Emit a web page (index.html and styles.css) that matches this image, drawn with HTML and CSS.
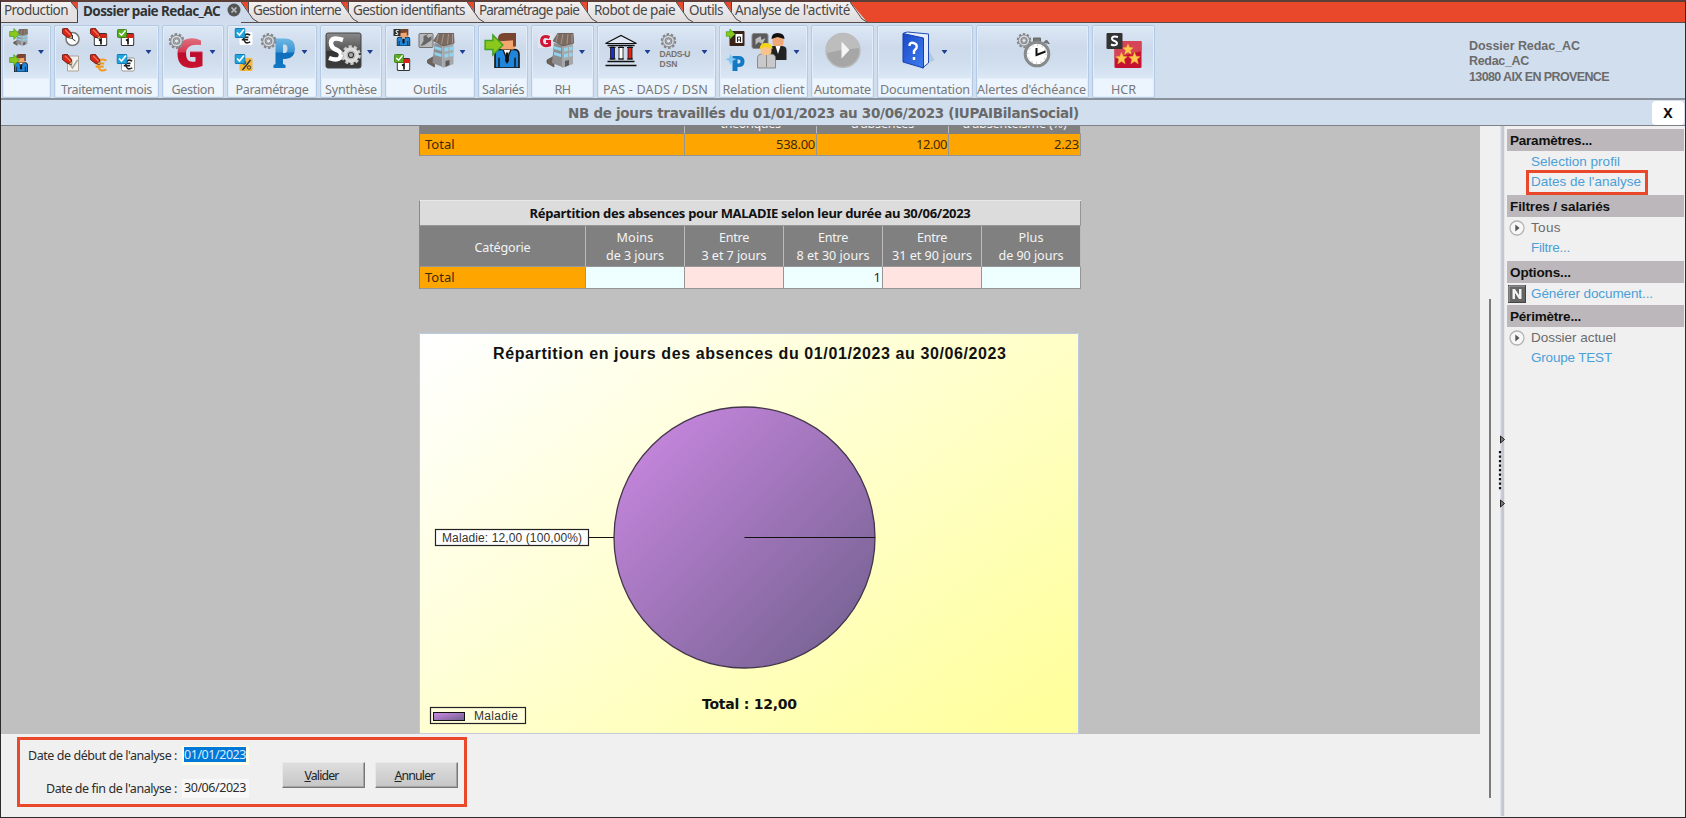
FILE: index.html
```html
<!DOCTYPE html>
<html lang="fr">
<head>
<meta charset="utf-8">
<title>Dossier paie Redac_AC</title>
<link rel="stylesheet" href="styles.css">
</head>
<body>
<svg class="defs" width="0" height="0">
  <defs>
    <linearGradient id="gloss" x1="0" y1="0" x2="0" y2="1"><stop offset="0" stop-color="#e0707c"/><stop offset=".45" stop-color="#d63a52"/><stop offset=".5" stop-color="#bd0c2c"/><stop offset="1" stop-color="#c9122f"/></linearGradient>
    <linearGradient id="glossBlue" x1="0" y1="0" x2="0" y2="1"><stop offset="0" stop-color="#6db6e4"/><stop offset=".45" stop-color="#3d95d4"/><stop offset=".5" stop-color="#0f6fbb"/><stop offset="1" stop-color="#1278c4"/></linearGradient>
    <linearGradient id="dark" x1="0" y1="0" x2="0" y2="1"><stop offset="0" stop-color="#8a8a8a"/><stop offset=".5" stop-color="#555"/><stop offset=".51" stop-color="#333"/><stop offset="1" stop-color="#3c3c3c"/></linearGradient>
    <linearGradient id="book" x1="0" y1="0" x2="1" y2="1"><stop offset="0" stop-color="#1a49c8"/><stop offset="1" stop-color="#3f7df0"/></linearGradient>
    <symbol id="gear" viewBox="0 0 16 16"><circle cx="8" cy="8" r="6.800" fill="none" stroke="#85888c" stroke-width="2.200" stroke-dasharray="2.600 1.670"/><circle cx="8" cy="8" r="4.400" fill="none" stroke="#8b8e92" stroke-width="3.800"/><circle cx="8" cy="8" r="4.600" fill="none" stroke="#d9dbde" stroke-width="1.500"/><circle cx="8" cy="8" r="2" fill="#e8edf5" stroke="#777" stroke-width=".7"/></symbol>
    <symbol id="gearLight" viewBox="0 0 16 16"><circle cx="8" cy="8" r="6.800" fill="none" stroke="#c9c9c9" stroke-width="2.200" stroke-dasharray="2.600 1.670"/><circle cx="8" cy="8" r="4.400" fill="none" stroke="#dcdcdc" stroke-width="3.800"/><circle cx="8" cy="8" r="3.200" fill="none" stroke="#aaa" stroke-width=".7"/><circle cx="8" cy="8" r="1.600" fill="#aaa"/></symbol>
    <symbol id="drop" viewBox="0 0 6 4"><path d="M0 0H6L3 4Z" fill="#1c3f94"/></symbol>
    <symbol id="arrow" viewBox="0 0 18 20"><path d="M1 6H8V1L17 10L8 19V14H1Z" fill="#8cc81c" stroke="#3fa02a" stroke-width="1.300"/></symbol>
    <symbol id="tower" viewBox="0 0 28 35" preserveAspectRatio="none"><path d="M1 27L8 23V34L1 30Z" fill="#6f6259" stroke="#444" stroke-width=".6"/><path d="M8 10L16 12V34L6 30Z" fill="#8e8e90"/><path d="M16 12L27 10V31L16 35Z" fill="#a7a7a9"/><path d="M7 8L12 0H27L28 10L17 13Z" fill="#7b6a60" stroke="#555" stroke-width=".6"/><path d="M12 1L10 9M17 1L15 11M22 1L21 11M26 1L26 10" stroke="#a8978c" stroke-width="1"/><path d="M8 13L15 15V18L8 16ZM18 15L22 14.300V18L18 18.700ZM23 14L26.500 13.400V17L23 17.700ZM8 19L15 21V24L8 22ZM18 21L22 20.300V24L18 24.700ZM23 20L26.500 19.400V23L23 23.700Z" fill="#8fd3ee"/><path d="M19 28L23 27V32L19 34Z" fill="#5c5c5e"/></symbol>
    <symbol id="man" viewBox="0 0 26 34" preserveAspectRatio="none"><path d="M1 34V21Q1 16 6 16H20Q25 16 25 21V34Z" fill="#1f86dc" stroke="#111" stroke-width="1.600"/><path d="M9 16L13 26L17 16Z" fill="#fff" stroke="#111" stroke-width="1.200"/><path d="M12 19H14.500L15 27L13 30L11 27Z" fill="#111"/><path d="M5 24V33M21 24V33" stroke="#111" stroke-width="1.400"/><rect x="6" y="2" width="15" height="14" rx="3" fill="#f2a56f"/><path d="M4 8Q3 0 10 0H22V13H19V7Q10 8 4 8Z" fill="#7a452f"/></symbol>
    <symbol id="pencil" viewBox="0 0 12 12"><path d="M1 1L6 0L11 6L11 11L6 10L1 6Z" fill="#d92717" stroke="#5c130b" stroke-width=".9"/><path d="M4 2L10 8" stroke="#f57b60" stroke-width="1.300"/><path d="M8 11L11.500 7.500L11.500 11.500Z" fill="#f5c26b" stroke="#333" stroke-width=".6"/></symbol>
    <symbol id="calendar" viewBox="0 0 14 14"><rect x=".7" y="1.500" width="12.600" height="12" rx="1.500" fill="#fff" stroke="#333" stroke-width="1.200"/><path d="M1 2H13V6H1Z" fill="#d82418"/><path d="M5.500 8.500L7.500 7.300V12.500" fill="none" stroke="#111" stroke-width="1.700"/></symbol>
    <symbol id="okGreen" viewBox="0 0 11 10"><rect x=".5" y=".5" width="10" height="9" rx="1" fill="#5aae23" stroke="#3d7d15"/><path d="M2.500 4.500L5 7L9.500 1.500" fill="none" stroke="#fff" stroke-width="1.600"/></symbol>
    <symbol id="okBlue" viewBox="0 0 11 10"><rect x=".5" y=".5" width="10" height="9" rx="1" fill="#22a4dc" stroke="#127bb0"/><path d="M2.500 4.500L5 7L9.500 1.500" fill="none" stroke="#fff" stroke-width="1.600"/></symbol>
    <symbol id="euro" viewBox="0 0 12 13"><path d="M11 2.500Q4 -1 3.500 6.500Q4 14 11 10.500M1 5.200H9M1 8H8.500" fill="none" stroke="currentColor" stroke-width="1.900"/></symbol>
    <symbol id="star" viewBox="0 0 12 12"><path d="M6 0L7.700 4.200L12 4.500L8.700 7.300L9.800 12L6 9.500L2.200 12L3.300 7.300L0 4.500L4.300 4.200Z" fill="#ffc94d" stroke="#e8932d" stroke-width=".4"/></symbol>
    <symbol id="bullet" viewBox="0 0 16 16"><circle cx="8" cy="8" r="7" fill="#f7f7f7" stroke="#b4b4b4" stroke-width="1.300"/><path d="M6.300 4.500L10.500 8L6.300 11.500Z" fill="#555"/></symbol>
  </defs>
</svg>
<div class="window">
  <nav class="tabs">
    <a class="tab w-prod"><span data-w="64">Production</span></a>
    <svg class="corner" viewBox="0 0 7 20"><path d="M0 0H7V8Z" fill="#e9492a"/><path d="M0 0L6.500 8V20" fill="none" stroke="#444"/></svg>
    <a class="tab active w-paie"><span data-w="137">Dossier paie Redac_AC</span>
      <svg class="close" viewBox="0 0 14 14"><circle cx="7" cy="7" r="6.500" fill="#555"/><path d="M4.500 4.500L9.500 9.500M9.500 4.500L4.500 9.500" stroke="#b8bcc2" stroke-width="1.700"/></svg></a>
    <svg class="slant blue" viewBox="0 0 17 20"><path d="M0 0H8V10Z" fill="#e9492a"/><path class="own" d="M0 0L12 17L17 20H0Z"/><path d="M0 0L12 17L17 20M7.500 0V10" class="edge"/></svg>
    <a class="tab w-int"><span data-w="88">Gestion interne</span></a>
    <svg class="slant" viewBox="0 0 17 20"><path d="M0 0H8V10Z" fill="#e9492a"/><path d="M0 0L12 17L17 20M7.500 0V10" class="edge"/></svg>
    <a class="tab w-ident"><span data-w="112">Gestion identifiants</span></a>
    <svg class="slant" viewBox="0 0 17 20"><path d="M0 0H8V10Z" fill="#e9492a"/><path d="M0 0L12 17L17 20M7.500 0V10" class="edge"/></svg>
    <a class="tab w-param"><span data-w="100">Paramétrage paie</span></a>
    <svg class="slant" viewBox="0 0 17 20"><path d="M0 0H8V10Z" fill="#e9492a"/><path d="M0 0L12 17L17 20M7.500 0V10" class="edge"/></svg>
    <a class="tab w-robot"><span data-w="81">Robot de paie</span></a>
    <svg class="slant" viewBox="0 0 17 20"><path d="M0 0H8V10Z" fill="#e9492a"/><path d="M0 0L12 17L17 20M7.500 0V10" class="edge"/></svg>
    <a class="tab w-outils"><span data-w="34">Outils</span></a>
    <svg class="slant" viewBox="0 0 17 20"><path d="M0 0H8V10Z" fill="#e9492a"/><path d="M0 0L12 17L17 20M7.500 0V10" class="edge"/></svg>
    <a class="tab w-act"><span data-w="115">Analyse de l'activité</span></a>
    <svg class="slant" viewBox="0 0 17 20"><path d="M0 0H17V20Z" fill="#e9492a"/><path d="M0 0L12 17L17 20" class="edge"/></svg>
  </nav>

  <header class="ribbon">
    <section class="group g1"><svg viewBox="2 25 49 53">
      <use href="#tower" x="13" y="29" width="15" height="17"/><use href="#arrow" x="9" y="28" width="11" height="12"/>
      <use href="#man" x="14" y="54" width="14" height="18"/><use href="#arrow" x="9" y="54" width="11" height="12"/>
      <use href="#drop" x="38" y="50" width="6" height="4"/></svg><h2></h2></section>
    <section class="group g2"><svg viewBox="55 25 104 53">
      <circle cx="73" cy="39" r="6.500" fill="#fff" stroke="#777" stroke-width="1.500"/><path d="M73 35V39L76 41" stroke="#333" fill="none"/><use href="#pencil" x="62" y="28" width="11" height="11"/>
      <use href="#calendar" x="94" y="32" width="14" height="14"/><use href="#pencil" x="90" y="28" width="11" height="11"/>
      <use href="#calendar" x="121" y="32" width="14" height="14"/><use href="#okGreen" x="117" y="29" width="11" height="9"/>
      <path d="M68 56H79V71H68Z" fill="#f3f1ec" stroke="#aaa59c"/><path d="M70 64L73 68L78 60" stroke="#aaa59c" fill="none" stroke-width="1.500"/><use href="#pencil" x="62" y="54" width="11" height="11"/>
      <use href="#euro" x="95" y="58" width="13" height="14" color="#f29a22"/><use href="#pencil" x="90" y="54" width="11" height="11"/>
      <rect x="122" y="58" width="13" height="13" rx="1.500" fill="#fff" stroke="#999"/><use href="#euro" x="123" y="59" width="11" height="11" color="#222"/><use href="#okBlue" x="117" y="54" width="11" height="10"/>
      <use href="#drop" x="146" y="50" width="6" height="4"/></svg><h2 data-w="91">Traitement mois</h2></section>
    <section class="group g3"><svg viewBox="163 25 61 53">
      <path d="M201.500 45V40.500Q197 38.300 192 38.300Q178 39 178 53.500Q178 68 192 68Q198 68 203 66V51.500H190.500V57H196V61.500Q186.500 63.500 186.500 53.500Q186.500 43 201.500 45Z" fill="url(#gloss)"/><use href="#gear" x="169" y="33" width="16" height="16"/>
      <use href="#drop" x="210" y="50" width="6" height="4"/></svg><h2 data-w="43">Gestion</h2></section>
    <section class="group g4"><svg viewBox="228 25 89 53">
      <rect x="240" y="32" width="13" height="13" rx="1.500" fill="#fff"/><use href="#euro" x="241" y="33" width="11" height="11" color="#222"/><use href="#okBlue" x="235" y="28" width="11" height="10"/>
      <rect x="240" y="58" width="13" height="13" rx="1.500" fill="#f5b63c"/><path d="M243 70L251 60" stroke="#333" stroke-width="1.400"/><circle cx="244.500" cy="62.500" r="1.700" fill="none" stroke="#333"/><circle cx="249.500" cy="67.500" r="1.700" fill="none" stroke="#333"/><use href="#okBlue" x="235" y="54" width="11" height="10"/>
      <path fill-rule="evenodd" d="M274 38.500H286Q295.500 38.500 295.500 48.500Q295.500 58.500 286 59H283.500V64L286 65V68H274V65L276 64V43L274 42ZM283.500 44.500V53H285Q288 53 288 48.500Q288 44.500 285 44.500Z" fill="url(#glossBlue)"/><use href="#gear" x="261" y="33" width="16" height="16"/>
      <use href="#drop" x="302" y="50" width="6" height="4"/></svg><h2 data-w="73">Paramétrage</h2></section>
    <section class="group g5"><svg viewBox="320 25 62 53">
      <rect x="326" y="33" width="35" height="35" rx="2" fill="url(#dark)" stroke="#444"/><path d="M343 40Q331 36 331 43Q331 48 337 50Q343 53 340 58Q337 61 329 58" fill="none" stroke="#fff" stroke-width="4.500"/><use href="#gearLight" x="341" y="45" width="20" height="20"/>
      <use href="#drop" x="367" y="50" width="6" height="4"/></svg><h2 data-w="52">Synthèse</h2></section>
    <section class="group g6"><svg viewBox="385 25 89 53">
      <use href="#man" x="396" y="29" width="14" height="17"/><rect x="393" y="29" width="7" height="7" fill="#333"/><path d="M398 30.500Q395 30 395.500 32Q398.500 33 397 34.500H395" stroke="#fff" fill="none"/>
      <use href="#calendar" x="396" y="57" width="14" height="14"/><use href="#okGreen" x="393" y="54" width="11" height="9"/>
      <use href="#tower" x="426" y="33" width="28" height="35"/><rect x="418.500" y="33.500" width="14" height="14" rx="1" fill="#b9b9bb" stroke="#707070"/><path d="M420 46L424 45L431 40V36L428 38L426 36L428 34L423 36L423 41Z" fill="#666"/>
      <use href="#drop" x="459" y="50" width="6" height="4"/></svg><h2 data-w="34">Outils</h2></section>
    <section class="group g7"><svg viewBox="478 25 50 53"><use href="#man" x="494" y="33" width="26" height="35"/><use href="#arrow" x="484" y="33" width="20" height="24"/></svg><h2 data-w="42">Salariés</h2></section>
    <section class="group g8"><svg viewBox="531 25 63 53">
      <use href="#tower" x="546" y="33" width="28" height="35"/><rect x="538" y="33" width="15" height="15" fill="#dfe4ee"/><path d="M549.500 37.500Q542 34.500 541.500 41Q542 47.500 549.500 45V41.500H546" fill="none" stroke="#cf1735" stroke-width="3"/>
      <use href="#drop" x="579" y="50" width="6" height="4"/></svg><h2 data-w="16">RH</h2></section>
    <section class="group g9"><svg viewBox="597 25 118 53">
      <path d="M605 43.500L620.500 35.500L636 43.500Z" fill="#dfe8f4" stroke="#111" stroke-width="1.200"/><path d="M607 45.500H634M607 61.500H634M605 65.500H636" stroke="#111" stroke-width="1.600"/><path d="M610 47H614V59H610Z" fill="#1a2fc4" stroke="#111" stroke-width=".8"/><path d="M618.500 47H622.500V59H618.500Z" fill="#fff" stroke="#111" stroke-width=".8"/><path d="M627.500 47H631.500V59H627.500Z" fill="#e2231a" stroke="#111" stroke-width=".8"/><path d="M609 47.500H615M617.500 47.500H623.500M626.500 47.500H632.500M609 59H615M617.500 59H623.500M626.500 59H632.500" stroke="#111"/>
      <use href="#drop" x="644" y="50" width="6" height="4"/><use href="#gear" x="660" y="33" width="16" height="16"/>
      <text x="659" y="57" class="mini" textLength="31">DADS-U</text><text x="659" y="67" class="mini" textLength="18">DSN</text>
      <use href="#drop" x="701" y="50" width="6" height="4"/></svg><h2 data-w="105">PAS - DADS / DSN</h2></section>
    <section class="group g10"><svg viewBox="719 25 88 53">
      <rect x="729" y="31" width="15" height="15" rx="1" fill="#3a2216"/><rect x="735" y="34" width="7" height="9" fill="#fff"/><path d="M737 42V37H740V42M737 40H740" stroke="#222" fill="none"/><use href="#arrow" x="725" y="28" width="10" height="12"/>
      <path fill-rule="evenodd" d="M732 56H738Q744 56 744 61.500Q744 67 738 67H737V71H732ZM737 59.500V63.500H738.500Q740 63.500 740 61.500Q740 59.500 738.500 59.500Z" fill="#1479c4"/><path d="M730 54L732 58L736 59L732 61L730 65L728.500 61L725 59L728.500 58Z" fill="#80c8f2"/>
      <rect x="751.500" y="33.500" width="16" height="15" rx="2" fill="#5a5a5a" stroke="#888"/><path d="M755 39L760 36L761 40L765 38L762 44L758 42L755 45Z" fill="#bbb"/>
      <path d="M768 60V50Q768 46 773 46H781Q786 46 786 50V60Z" fill="#222"/><path d="M775 46L777.500 54L780 46Z" fill="#fff"/><rect x="772" y="35" width="11" height="11" rx="3" fill="#f0a878"/><path d="M771 39Q771 33 777 33Q784 33 784 39L777 37Z" fill="#111"/>
      <path d="M757 68V58Q757 54 762 54H770Q775 54 775 58V68Z" fill="#c9c9cb" stroke="#777" stroke-width=".8"/><path d="M766 55V67" stroke="#888"/><rect x="760" y="45" width="11" height="10" rx="4" fill="#f8c48c"/><path d="M759 49Q760 42 766 43Q772 43 772 49L766 47Z" fill="#f5d51c"/>
      <use href="#drop" x="793" y="50" width="6" height="4"/></svg><h2 data-w="82">Relation client</h2></section>
    <section class="group g11"><svg viewBox="811 25 62 53"><circle cx="842.500" cy="50.500" r="17" fill="#a6a6a6" stroke="#bcbcbc" stroke-width="1.500"/><path d="M826 51A16.500 16.500 0 0 1 859 48Q843 49 826 53Z" fill="#bdbdbd"/><path d="M841 41.500L849 50L841 58.500Z" fill="#f5f5f5"/></svg><h2 data-w="57">Automate</h2></section>
    <section class="group g12"><svg viewBox="877 25 95 53"><path d="M923 65L934 60L926 47Z" fill="#a9bddb" opacity=".7"/><path d="M903 33L907 32L928 34V63L922 68Z" fill="#e9effa" stroke="#1f4db5"/><path d="M902.500 33.500L923 38V68L902.500 62Z" fill="url(#book)" stroke="#173fae"/><path d="M909 46Q909 42 913 43Q917 44 916 48L913.500 51V54M913.500 57V60" stroke="#fff" stroke-width="2.400" fill="none"/><use href="#drop" x="941" y="50" width="6" height="4"/></svg><h2 data-w="90">Documentation</h2></section>
    <section class="group g13"><svg viewBox="976 25 112 53"><path d="M1033 38H1040V42H1033ZM1025 43L1028 40L1031 43M1043 43L1046 40L1049 44" fill="#777" stroke="#666"/><circle cx="1036.500" cy="54" r="11.800" fill="#fff" stroke="#88898b" stroke-width="3"/><circle cx="1036.500" cy="54" r="9" fill="none" stroke="#999" stroke-dasharray="1 3.700"/><path d="M1036 48V55L1045 51.500" fill="none" stroke="#111" stroke-width="2"/><use href="#gear" x="1016" y="33" width="15" height="15"/></svg><h2 data-w="109">Alertes d'échéance</h2></section>
    <section class="group g14"><svg viewBox="1092 25 62 53"><rect x="1114" y="41" width="27" height="27" rx="1.500" fill="#c51231"/><path d="M1114 41H1141V51Q1127 54 1114 59Z" fill="#d64458"/><use href="#star" x="1122" y="43" width="11" height="12"/><use href="#star" x="1115" y="52" width="12" height="12"/><use href="#star" x="1128" y="52" width="12" height="12"/><rect x="1106" y="33" width="16" height="16" rx="1" fill="#333"/><path d="M1117.500 37Q1111 35.500 1111.500 39Q1112 40.500 1114 41Q1117.500 42.500 1116 44.500Q1114 46 1110.500 44.500" fill="none" stroke="#fff" stroke-width="2.100"/></svg><h2 data-w="25">HCR</h2></section>
    <address class="client"><span data-w="111">Dossier Redac_AC</span><span data-w="60">Redac_AC</span><span data-w="140">13080 AIX EN PROVENCE</span></address>
  </header>

  <div class="titlebar"><h1 data-w="511">NB de jours travaillés du 01/01/2023 au 30/06/2023 (IUPAIBilanSocial)</h1><button class="x">X</button></div>

  <main class="body">
    <div class="workspace">
      <div class="report">
        <div class="grid rate">
          <div class="head"></div><div class="head"><span data-w="60">théoriques</span></div><div class="head"><span data-w="63">d'absences</span></div><div class="head"><span data-w="104">d'absentéisme (%)</span></div>
          <div class="total">Total</div><div class="total num"><span data-w="39">538.00</span></div><div class="total num"><span data-w="31">12.00</span></div><div class="total num"><span data-w="25">2.23</span></div>
        </div>
        <div class="grid spread">
          <div class="caption"><span data-w="441">Répartition des absences pour MALADIE selon leur durée au 30/06/2023</span></div>
          <div class="head single"><span data-w="56">Catégorie</span></div>
          <div class="head"><span data-w="37">Moins</span><span data-w="58">de 3 jours</span></div>
          <div class="head"><span data-w="30">Entre</span><span data-w="65">3 et 7 jours</span></div>
          <div class="head"><span data-w="30">Entre</span><span data-w="73">8 et 30 jours</span></div>
          <div class="head"><span data-w="30">Entre</span><span data-w="80">31 et 90 jours</span></div>
          <div class="head"><span data-w="25">Plus</span><span data-w="65">de 90 jours</span></div>
          <div class="total">Total</div><div class="cyan"></div><div class="pink"></div><div class="cyan num">1</div><div class="pink"></div><div class="cyan"></div>
        </div>
        <svg class="chart" viewBox="419 333 660 401">
          <defs>
            <linearGradient id="paper" gradientUnits="userSpaceOnUse" x1="480" y1="300" x2="880" y2="830"><stop offset="0" stop-color="#fff"/><stop offset=".08" stop-color="#fffff8"/><stop offset="1" stop-color="#ffff9e"/></linearGradient>
            <linearGradient id="slice" x1=".12" y1=".12" x2=".88" y2=".88"><stop offset="0" stop-color="#c385db"/><stop offset="1" stop-color="#7a6496"/></linearGradient>
          </defs>
          <rect x="419" y="333" width="660" height="401" fill="url(#paper)"/><path d="M419.500 734V333.500H1078.500V734" fill="none" stroke="#b9cbe0"/><path d="M419 733.500H1079" stroke="#c4ccd8"/>
          <text class="heading" x="493" y="358.500" textLength="513">Répartition en jours des absences du 01/01/2023 au 30/06/2023</text>
          <circle cx="744.500" cy="537.500" r="130.500" fill="url(#slice)" stroke="#43364c" stroke-width="1.300"/>
          <path d="M744.500 537.500H875M589 537.500H614" stroke="#111" stroke-width="1.200"/>
          <rect x="435.500" y="529.500" width="153" height="16" fill="#fff" stroke="#222" stroke-width="1.200"/>
          <text class="tag" x="442" y="541.500" textLength="140">Maladie: 12,00 (100,00%)</text>
          <text class="sum" x="702" y="708.500" textLength="95">Total : 12,00</text>
          <rect x="430.500" y="707.500" width="95" height="16" fill="#ffffdc" stroke="#222" stroke-width="1.200"/><rect x="433.500" y="712.500" width="31" height="8" fill="url(#slice)" stroke="#111"/>
          <text class="tag" x="474" y="719.500" textLength="44">Maladie</text>
        </svg>
      </div>
      <form class="dates">
        <div class="fields">
          <label data-w="149">Date de début de l'analyse :</label><span class="field focus"><mark data-w="62">01/01/2023</mark></span>
          <label data-w="131">Date de fin de l'analyse :</label><span class="field"><span data-w="62">30/06/2023</span></span>
        </div>
        <button type="button"><span data-w="34"><u>V</u>alider</span></button><button type="button"><span data-w="40"><u>A</u>nnuler</span></button>
      </form>
    </div>
    <div class="scroll"><i></i></div>
    <svg class="splitter" viewBox="1498 126 7 690"><path d="M1502.500 126V816" stroke="#c4c6d2" stroke-width="3.500"/><path d="M1501 126V816" stroke="#d9dae2"/><path d="M1500.500 436L1504.500 439.500L1500.500 443ZM1500.500 500L1504.500 503.500L1500.500 507Z" fill="#777" stroke="#222"/><path d="M1500 451V489.500" stroke="#111" stroke-width="2.200" stroke-dasharray="2.300 2.200"/></svg>
    <aside class="side">
      <h3><span data-w="82">Paramètres...</span></h3>
      <div class="links pad1"><a data-w="89">Selection profil</a><a class="boxed"><span data-w="110">Dates de l'analyse</span></a></div>
      <h3><span data-w="100">Filtres / salariés</span></h3>
      <div class="links pad2"><a class="cur"><svg viewBox="0 0 16 16"><use href="#bullet"/></svg><span data-w="30">Tous</span></a><a data-w="39">Filtre...</a></div>
      <h3><span data-w="61">Options...</span></h3>
      <div class="links pad3"><a><svg class="nico" viewBox="0 0 18 18"><rect x=".5" y=".5" width="17" height="17" fill="#666" stroke="#444"/><path d="M1 17V1H17" fill="none" stroke="#aaa"/><path d="M4.500 14V4H7L11 10V4H13.500V14H11L7 8V14Z" fill="#f2f2f2"/></svg><span data-w="122">Générer document...</span></a></div>
      <h3><span data-w="71">Périmètre...</span></h3>
      <div class="links pad4"><a class="cur"><svg viewBox="0 0 16 16"><use href="#bullet"/></svg><span data-w="85">Dossier actuel</span></a><a data-w="81">Groupe TEST</a></div>
    </aside>
  </main>
</div>
<script src="fit.js"></script>
</body>
</html>
```
FILE: styles.css
```css
* { box-sizing: border-box; }
body { margin: 0; font-family: "Noto Sans", "Open Sans", sans-serif; font-size: 13px; background: #f0f0f0; }
h1, h2, h3 { margin: 0; }
[data-w] { white-space: nowrap; }
.defs { position: absolute; }
.window { width: 1686px; height: 818px; display: flex; flex-direction: column; overflow: hidden; border: solid #2c2a2c; border-width: 2px 1px 1px 1px; border-top-color: #5d3d38; }

.tabs { display: flex; height: 21px; flex: none; background: #e9492a; border-bottom: 1px solid #5b4a4a; }
.tab { display: flex; align-items: center; height: 20px; background: linear-gradient(#f3f1f2, #dedbdc); color: #474747; font-size: 13.5px; line-height: 16px; }
.tab > span { position: relative; z-index: 1; margin: -4px 0 0 -5px; }
.tab.w-prod > span { margin-left: 3px; }
.tab.active { background: linear-gradient(#c9d6e8, #d2deee); color: #333; font-weight: 700; height: 21px; }
.tab.active > span { margin-left: 5px; }
.corner { width: 7px; height: 20px; background: #e4e1e2; }
.slant { width: 17px; height: 20px; background: linear-gradient(#f3f1f2, #dedbdc); }
.slant .own { fill: #ced9ea; }
.slant .edge { fill: none; stroke: #4f4a4a; stroke-width: 1; }
.close { width: 14px; height: 14px; margin: -5px 0 0 7px; }
.w-prod { width: 70px; } .w-paie { width: 163px; } .w-int { width: 83px; } .w-ident { width: 109px; }
.w-param { width: 96px; } .w-robot { width: 79px; } .w-outils { width: 31px; } .w-act { width: 109px; }
.tab.w-robot > span { margin-left: -3px; }
.tab.w-outils > span { margin-left: -4px; }
.tab.w-act > span { margin-left: -6px; }

.ribbon { display: flex; flex: none; gap: 3px; height: 77px; padding: 2px 0 0 1px; background: #d1deee; border-bottom: 2px solid #8b919a; }
.group { height: 73px; flex: none; display: flex; flex-direction: column; background: linear-gradient(#dde8f5, #cddaeb 22px, #cfdded 36px, #dbe7f5 52px, #ecf5fe 53px); border: 1px solid #b3cae6; border-radius: 2px; box-shadow: inset 0 0 0 1px #e2edf9; }
.group svg { height: 53px; margin: -1px -1px 0; display: block; flex: none; }
.group h2 { height: 20px; align-self: center; color: #787878; font-size: 12.6px; font-weight: 400; line-height: 23px; text-align: center; }
.g1 { width: 49px; } .g2 { width: 105px; } .g3 { width: 62px; } .g4 { width: 90px; } .g5 { width: 62px; } .g6 { width: 90px; } .g7 { width: 50px; }
.g8 { width: 63px; } .g9 { width: 119px; } .g10 { width: 89px; } .g11 { width: 63px; } .g12 { width: 96px; } .g13 { width: 113px; } .g14 { width: 63px; }
.g9 h2, .g13 h2 { margin-left: -2px; }
.mini { font: 700 8.5px "Liberation Sans", sans-serif; fill: #79726b; }
.client { display: flex; flex-direction: column; margin: 14px 0 0 311px; font: 700 12.5px/15.4px "Liberation Sans", Arial, sans-serif; color: #6b6b6b; }

.titlebar { display: flex; flex: none; height: 26px; background: #d1deee; border-bottom: 1px solid #7d8187; }
.titlebar h1 { height: 25px; margin-left: 567px; font: 700 13.5px/26px "DejaVu Sans", Verdana, sans-serif; color: #696969; }
.x { margin: 1px 1px 0 auto; width: 32px; height: 24px; padding: 0; border: 0; border-radius: 4px; background: #fff; font: 700 14px/22px "Noto Sans", sans-serif; color: #111; }

.body { display: flex; flex: 1; min-height: 0; }
.workspace { width: 1479px; display: flex; flex-direction: column; }
.report { height: 608px; background: #c0c0c0; padding-left: 418px; overflow: hidden; flex: none; }
.grid { display: grid; width: 662px; border-left: 1px solid #888; color: #3c2a0a; }
.grid > div { border-right: 1px solid #969696; border-bottom: 1px solid #969696; }
.grid .head { display: flex; flex-direction: column; align-items: center; justify-content: center; padding-top: 1px; background: #808080; color: #f4f4f4; border-right-color: #bbb; line-height: 17.5px; font-size: 12.6px; }
.grid .head.single { padding-top: 3px; }
.grid .total { background: #ffa500; padding-left: 5px; line-height: 20px; }
.grid .num { text-align: right; padding-right: 1px; line-height: 20px; }
.rate { grid-template-columns: 265px 132px 132px 132px; grid-template-rows: 8px 22px; }
.grid.rate .head { justify-content: flex-end; overflow: hidden; padding: 0 0 1px; border-bottom-color: #808080; }
.spread { margin-top: 44px; grid-template-columns: 166px repeat(5, 99px); grid-template-rows: 25px 41px 22px; border-top: 1px solid #e8e8e8; }
.spread .caption { grid-column: 1 / -1; background: #dcdcdc; color: #111; font-weight: 700; text-align: center; line-height: 24px; }
.cyan { background: #efffff; }
.pink { background: #ffe4e1; }
.chart { display: block; width: 660px; height: 401px; margin-top: 44px; }
.heading { font: 700 16px "Liberation Sans", Arial, sans-serif; fill: #111; }
.tag { font: 12px "Liberation Sans", Arial, sans-serif; fill: #333; }
.sum { font: 700 14px "DejaVu Sans", Verdana, sans-serif; fill: #111; }

.dates { display: flex; align-items: flex-start; width: 450px; height: 70px; margin: 3px 0 0 16px; border: 3px solid #e9492a; }
.fields { flex: none; display: grid; grid-template-columns: 159px 67px; grid-template-rows: 19px 19px; row-gap: 14px; margin: 6px 33px 0 3px; align-items: center; justify-items: end; font-size: 12.5px; color: #2c2c2c; }
.fields label { margin-right: 5px; }
.field { width: 67px; height: 19px; padding-left: 2px; line-height: 18px; background: #f8f8f8; }
.field.focus { background: #ffffe8; }
.field mark { display: inline-block; height: 15px; line-height: 15px; background: #0078d7; color: #dcecff; }
.dates button { flex: none; width: 83px; height: 26px; margin: 22px 10px 0 0; padding: 0 4px 0 0; border: 1px solid; border-color: #e8e8e8 #777 #777 #e8e8e8; box-shadow: inset -1px -1px #a5a5a5; background: linear-gradient(#dedede, #c6c6c6); font: 12.300px "Noto Sans", sans-serif; color: #222; }
.dates button:last-child { margin-right: 0; }

.scroll { width: 18px; padding: 173px 0 0 9px; background: #f0f0f0; }
.scroll i { display: block; width: 2px; height: 499px; background: #7b7b7b; }
.splitter { width: 7px; height: 690px; flex: none; }
.side { flex: 1; padding: 3px 1px 0 2px; font: 13.5px/19px "Liberation Sans", Arial, sans-serif; }
.side h3 { height: 22px; padding-left: 3px; background: #bbb7ba; color: #111; font: 700 13.5px/23px "Liberation Sans", Arial, sans-serif; }
.links { display: flex; flex-direction: column; align-items: flex-start; padding-left: 24px; color: #4b9fd8; }
.links a { display: flex; align-items: center; height: 19.5px; }
.links svg { width: 16px; height: 16px; margin: 0 6px 0 -22px; }
.links svg.nico { width: 18px; height: 18px; margin: 0 5px 0 -23px; }
.links .cur { color: #6b6b6b; }
.pad1 { height: 44px; padding-top: 1px; }
.links .boxed { height: 25px; margin: -2px 0 0 -5px; padding: 0 4px 1px 2px; border: 3px solid #e9492a; width: 122px; }
.pad2 { height: 44px; padding-top: 1px; }
.pad3 { height: 22px; padding-top: 1px; }
.pad4 { padding-top: 1px; }
```
FILE: fit.js
```js
// Adjusts the tracking of each label so that it fills its slot, whatever the font available.
document.querySelectorAll('[data-w]').forEach(function (el) {
  var range = document.createRange();
  range.selectNodeContents(el);
  var natural = range.getBoundingClientRect().width;
  el.style.letterSpacing = (Number(el.dataset.w) - natural) / el.textContent.length + 'px';
});
```
